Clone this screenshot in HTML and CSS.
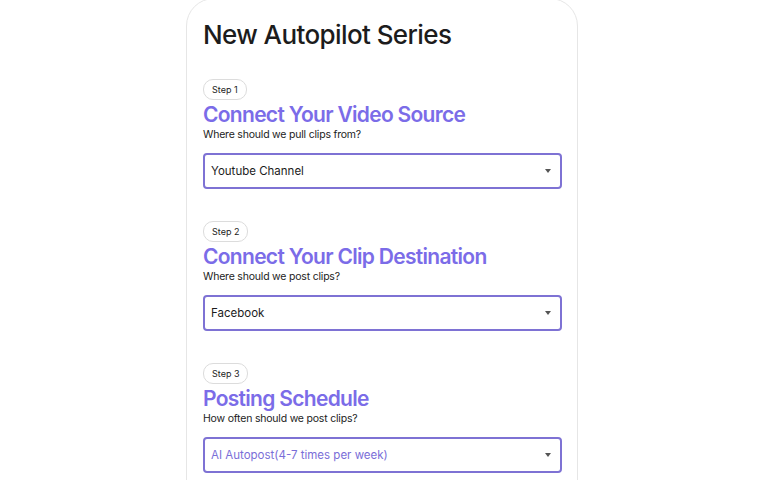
FILE: index.html
```html
<!DOCTYPE html>
<html lang="en">
<head>
    <meta charset="UTF-8">
    <meta name="viewport" content="width=device-width, initial-scale=1.0">
    <title>New Autopilot Series</title>
    <link rel="stylesheet" href="styles.css">
</head>
<body>

    <!-- Autopilot setup card -->
    <div class="card">
        <h1>New Autopilot Series</h1>

        <div class="step">
            <span class="badge">Step 1</span>
            <h2>Connect Your Video Source</h2>
            <p>Where should we pull clips from?</p>
            <div class="select">
                <span>Youtube Channel</span>
                <span class="caret"></span>
            </div>
        </div>

        <div class="step">
            <span class="badge">Step 2</span>
            <h2>Connect Your Clip Destination</h2>
            <p>Where should we post clips?</p>
            <div class="select">
                <span>Facebook</span>
                <span class="caret"></span>
            </div>
        </div>

        <div class="step">
            <span class="badge">Step 3</span>
            <h2>Posting Schedule</h2>
            <p>How often should we post clips?</p>
            <div class="select select-accent">
                <span>AI Autopost(4-7 times per week)</span>
                <span class="caret"></span>
            </div>
        </div>
    </div>

</body>
</html>
```

FILE: styles.css
```css
body {
    font-family: Inter, "Open Sans", sans-serif;
    background-color: white;
    margin: 0;
    padding: 0 4px 0 0;
    color: #1c1c1c;
}

.card {
    width: 359px;
    margin: -2px auto 0;
    padding: 18px 15px 0 16px;
    border: 1px solid #e6e6e6;
    border-radius: 28px;
    min-height: 500px;
}

h1 {
    font-size: 26px;
    font-weight: 500;
    letter-spacing: -0.6px;
    margin: 0 0 26px;
    line-height: 36px;
}

.step {
    display: flex;
    flex-direction: column;
    align-items: flex-start;
    margin-bottom: 32px;
}

.badge {
    font-size: 9px;
    padding: 0 8px;
    height: 19px;
    line-height: 19px;
    border: 1px solid #dcdcdc;
    border-radius: 10px;
    color: #222;
}

h2 {
    color: #7b6ce8;
    font-size: 21px;
    font-weight: 600;
    letter-spacing: -0.7px;
    margin: 2px 0 0;
    line-height: 25px;
}

p {
    font-size: 10.5px;
    margin: 0;
    line-height: 16px;
    letter-spacing: -0.2px;
}

.select {
    align-self: stretch;
    display: flex;
    justify-content: space-between;
    align-items: center;
    height: 32px;
    margin-top: 10px;
    padding: 0 9px 0 6px;
    border: 2px solid #7e72d4;
    border-radius: 4px;
    font-size: 11.5px;
    color: #1c1c1c;
}

.select-accent {
    color: #7a6ed8;
}

.caret {
    width: 0;
    height: 0;
    border-left: 3.5px solid transparent;
    border-right: 3.5px solid transparent;
    border-top: 4px solid #555;
}
```
